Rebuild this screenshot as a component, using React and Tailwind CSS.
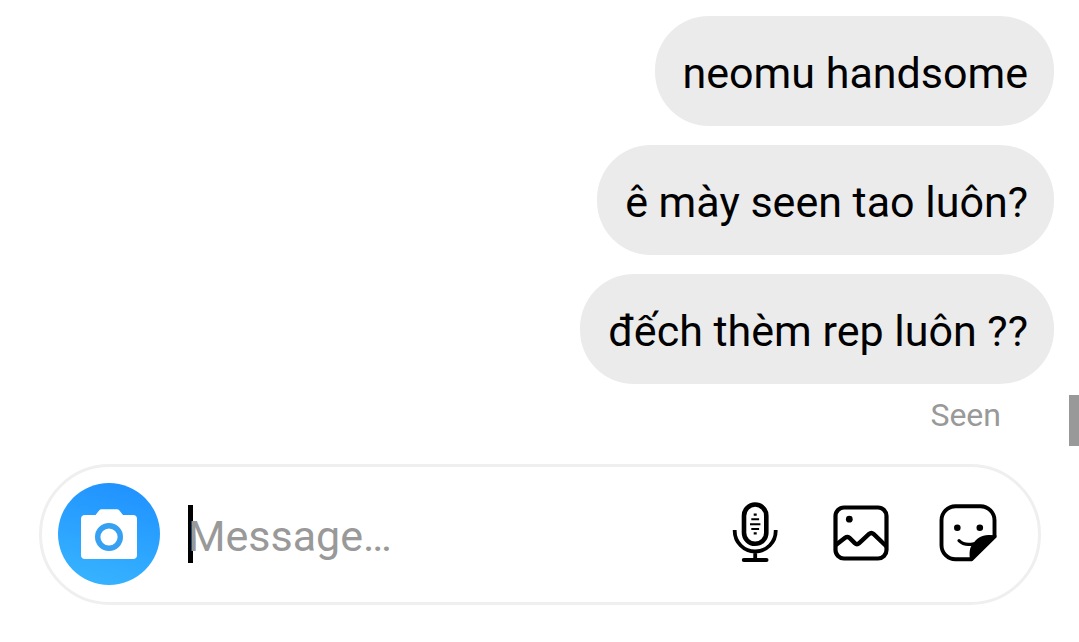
const messages = ['neomu handsome', 'ê mày seen tao luôn?', 'đếch thèm rep luôn ??'];

function CameraIcon() {
  return (
    <svg viewBox="0 0 102 102" className="size-full" aria-hidden="true">
      <path
        fill="#fff"
        d="M43.500 26.300H59q1.400 0 2.400 1.200L65 32h10q4 0 4 4v36q0 4-4 4H27q-4 0-4-4V36q0-4 4-4h10.500l3.600-4.500q1-1.200 2.400-1.200Z"
      />
      <circle cx="51" cy="54" r="11.300" fill="none" stroke="#36a0f2" strokeWidth="5.400" />
    </svg>
  );
}

function MicIcon() {
  return (
    <svg viewBox="0 0 60 60" className="size-full" fill="none" stroke="currentColor" aria-hidden="true">
      <rect x="19" y="2.500" width="22.300" height="39.300" rx="11.150" strokeWidth="4.600" />
      <path d="M9.700 28v1a20.500 20.500 0 0 0 41 0v-1M30.200 50v7" strokeWidth="3.800" />
      <path d="M18.800 58h22.700" strokeWidth="4" strokeLinecap="round" />
      <path
        d="M28.700 12.600h3M26.300 17.300h7.800M25 22.300h10.400M26.300 27h7.800M28.700 31.400h3"
        strokeWidth="2.100"
      />
    </svg>
  );
}

function PhotoIcon() {
  return (
    <svg viewBox="0 0 60 60" className="size-full" fill="none" stroke="currentColor" aria-hidden="true">
      <rect x="4.500" y="5.500" width="51" height="51" rx="8.500" strokeWidth="4.200" />
      <circle cx="18.300" cy="17.200" r="3.400" fill="currentColor" stroke="none" />
      <path
        d="M4.800 43l9.300-7.300q2.200-1.600 4.200 0l5.500 5.400q2.200 2 4.400 0l9.900-9.100q2.200-1.900 4.400 0L55.600 44.500"
        strokeWidth="4.400"
      />
    </svg>
  );
}

function StickerIcon() {
  return (
    <svg viewBox="0 0 60 60" className="size-full" fill="none" stroke="currentColor" aria-hidden="true">
      <path
        d="M35 57.200H18.500a14 14 0 0 1-14-14v-25a14 14 0 0 1 14-14h25a14 14 0 0 1 14 14V35.300"
        strokeWidth="3.900"
      />
      <path
        d="M59.400 33.200V35.500L35.500 59.100H33.200C32 51 32.500 45 36 42C39.500 36.500 44.500 32.800 52 33Z"
        fill="currentColor"
        stroke="none"
      />
      <circle cx="20.300" cy="25.700" r="3.300" fill="currentColor" stroke="none" />
      <circle cx="42.800" cy="25.700" r="3.300" fill="currentColor" stroke="none" />
      <path d="M22 38.700q5.500 5.500 15 3" strokeWidth="3.200" strokeLinecap="round" />
    </svg>
  );
}

const actions = [
  { label: 'Record voice message', Icon: MicIcon },
  { label: 'Send photo', Icon: PhotoIcon },
  { label: 'Send sticker', Icon: StickerIcon },
];

export default function App() {
  return (
    <main className="relative min-h-screen bg-white pt-4 pb-9 font-['Roboto','Noto_Sans',sans-serif] text-black">
      <ul className="flex flex-col items-end gap-[19px] pr-[25px] pl-10">
        {messages.map((text) => (
          <li
            key={text}
            className="rounded-[54px] bg-[#ebebeb] pt-8 pr-[26px] pb-7 pl-[28px] text-[43px] leading-[50px]"
          >
            {text}
          </li>
        ))}
      </ul>
      <p className="mt-3 pr-[78px] text-right text-[32px] leading-[38px] text-[#999999]">Seen</p>
      <div className="absolute top-[395px] right-0 h-[51px] w-[10px] bg-[#999999]" />

      <form
        className="mt-[30px] mr-[38px] ml-[39px] flex items-center rounded-full border-[3px] border-[#efefef] pt-4 pr-[41px] pb-[17px] pl-4"
        onSubmit={(event) => event.preventDefault()}
      >
        <button
          type="button"
          aria-label="Open camera"
          className="size-[102px] shrink-0 rounded-full bg-linear-[195deg] from-[#1e8fff] to-[#38b6ff]"
        >
          <CameraIcon />
        </button>
        <div className="relative ml-7 min-w-0 flex-1">
          <span className="absolute top-px left-0 h-[58px] w-[5px] bg-black" />
          <input
            type="text"
            aria-label="Message"
            placeholder="Message…"
            className="relative block h-[60px] w-full bg-transparent pt-1 text-[43px] caret-transparent outline-none placeholder:text-[#999999]"
          />
        </div>
        <div className="flex shrink-0 gap-[46px] pb-1">
          {actions.map(({ label, Icon }) => (
            <button key={label} type="button" aria-label={label} className="size-[60px]">
              <Icon />
            </button>
          ))}
        </div>
      </form>
    </main>
  );
}
